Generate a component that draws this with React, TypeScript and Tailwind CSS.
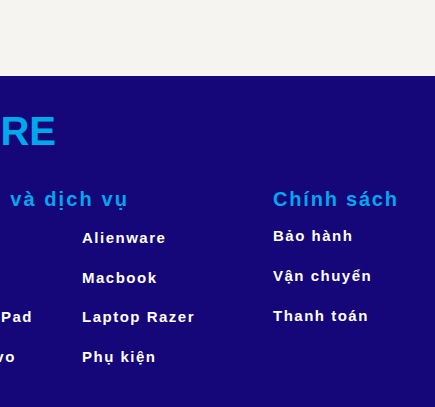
const products = {
  brands: ["Dell", "HP", "ThinkPad", "Lenovo"],
  others: ["Alienware", "Macbook", "Laptop Razer", "Phụ kiện"],
};

const policies = ["Bảo hành", "Vận chuyển", "Thanh toán"];

export default function App() {
  return (
    <div className="min-h-[407px] w-[435px] overflow-hidden bg-[#f5f4f0] font-['Liberation_Sans',Arial,sans-serif]">
      <div className="h-[76px]" />
      <footer className="h-[331px] bg-[#15067a] pt-[35px]">
        <div className="flex w-[56px] justify-end">
          <span className="whitespace-nowrap text-[40px] font-bold leading-none text-[#00a8ec]">
            GEARSTORE
          </span>
        </div>

        <div className="mt-[38px] flex items-start">
          <div className="flex flex-col">
            <div className="flex w-[129px] justify-end">
              <h3 className="whitespace-nowrap text-[20px] font-bold leading-none tracking-[2.1px] text-[#00a8ec]">
                <span className="mr-[10px]">Sản phẩm</span>
                <span>và dịch vụ</span>
              </h3>
            </div>
            <div className="mt-[21px] flex">
              <div className="flex w-[33px] justify-end">
                <ul className="flex shrink-0 flex-col gap-[24.5px]">
                  {products.brands.map((b) => (
                    <li
                      key={b}
                      className="whitespace-nowrap text-[15px] font-bold leading-none tracking-[1.5px] text-white"
                    >
                      {b}
                    </li>
                  ))}
                </ul>
              </div>
              <ul className="ml-[49px] flex flex-col gap-[24.5px]">
                {products.others.map((p) => (
                  <li
                    key={p}
                    className="whitespace-nowrap text-[15px] font-bold leading-none tracking-[1.5px] text-white"
                  >
                    {p}
                  </li>
                ))}
              </ul>
            </div>
          </div>

          <div className="ml-[78px] flex flex-col">
            <h3 className="whitespace-nowrap text-[20px] font-bold leading-none tracking-[1.8px] text-[#00a8ec]">
              Chính sách
            </h3>
            <ul className="mt-[19px] flex flex-col gap-[25px]">
              {policies.map((p) => (
                <li
                  key={p}
                  className="whitespace-nowrap text-[15px] font-bold leading-none tracking-[1.5px] text-white"
                >
                  {p}
                </li>
              ))}
            </ul>
          </div>
        </div>
      </footer>
    </div>
  );
}
